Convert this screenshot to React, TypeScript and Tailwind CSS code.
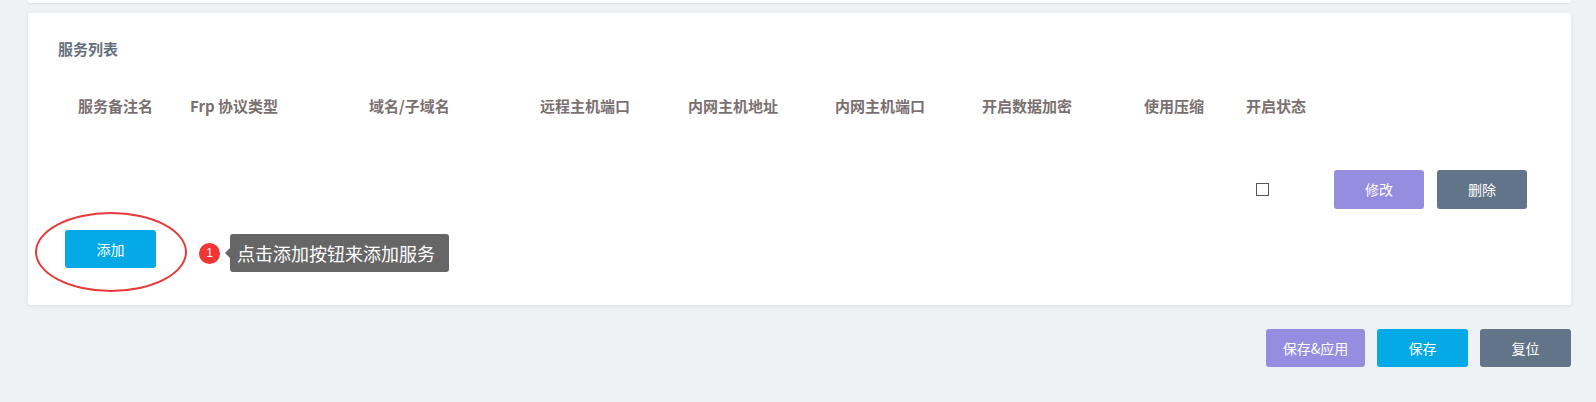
import React from 'react'

const cjk = { fontFamily: '"Noto Sans CJK SC", "Noto Sans", sans-serif' }

// header columns: label + cell width (px), text left-aligned
const columns: [string, number][] = [
  ['服务备注名', 112],
  ['Frp 协议类型', 179],
  ['域名/子域名', 171],
  ['远程主机端口', 148],
  ['内网主机地址', 147],
  ['内网主机端口', 147],
  ['开启数据加密', 162],
  ['使用压缩', 102],
  ['开启状态', 88],
]

export default function App() {
  return (
    <div className="w-full h-[402px] overflow-hidden bg-[#eff2f4] pl-[28px] pr-[25px]" style={cjk}>
      {/* tail of the card above */}
      <div className="h-[3px] bg-white rounded-b shadow-[0_1px_3px_rgba(0,0,0,0.08)]" />

      {/* service list card */}
      <div className="mt-[10px] h-[292px] bg-white rounded-[3px] shadow-[0_1px_4px_rgba(0,0,0,0.08)] pt-[26px] pl-[30px]">
        <h3 className="text-[15px] leading-[20px] font-semibold text-[#66717d]">服务列表</h3>

        {/* table header */}
        <div className="mt-[37px] flex pl-[20px] h-[20px] items-center">
          {columns.map(([label, w]) => (
            <div key={label} className="shrink-0 text-[15px] leading-[20px] font-bold text-[#7a7070] whitespace-nowrap" style={{ width: w }}>
              {label}
            </div>
          ))}
        </div>

        {/* single row */}
        <div className="mt-[54px] flex items-center h-[39px]">
          <div className="w-[1198px] shrink-0" />
          <div className="w-[78px] shrink-0 flex">
            <span className="w-[13px] h-[13px] border border-[#555] bg-white" />
          </div>
          <div className="flex gap-[13px]">
            <button className="w-[90px] h-[39px] rounded-[3px] bg-[#958ee0] text-white text-[14px]">修改</button>
            <button className="w-[90px] h-[39px] rounded-[3px] bg-[#627487] text-white text-[14px]">删除</button>
          </div>
        </div>

        {/* add button with annotation */}
        <div className="mt-[21px] flex items-start">
          <div className="relative ml-[7px]">
            <button className="relative z-10 w-[91px] h-[38px] rounded-[3px] bg-[#04a9e6] text-white text-[14px]">添加</button>
            <div className="absolute left-[-30px] top-[-18px] w-[152px] h-[80px] rounded-[50%] border-2 border-[#e53b3b]" />
          </div>
          <div className="ml-[43px] mt-[4px] flex items-center">
            <span className="w-[21px] h-[21px] rounded-full bg-[#ef3535] text-white text-[12px] leading-[21px] text-center" style={{ fontFamily: 'Arial, "Liberation Sans", sans-serif' }}>1</span>
            <span className="ml-[5px] w-0 h-0 border-y-[5px] border-y-transparent border-r-[5px] border-r-[#666]" />
            <span className="h-[38px] pl-[7px] pr-[14px] rounded-[3px] bg-[#666] text-white text-[18px] leading-[38px] whitespace-nowrap">点击添加按钮来添加服务</span>
          </div>
        </div>
      </div>

      {/* bottom actions */}
      <div className="mt-[24px] flex justify-end gap-[12px]">
        <button className="w-[99px] h-[38px] rounded-[3px] bg-[#958ee0] text-white text-[14px]">保存&amp;应用</button>
        <button className="w-[91px] h-[38px] rounded-[3px] bg-[#04a9e6] text-white text-[14px]">保存</button>
        <button className="w-[91px] h-[38px] rounded-[3px] bg-[#627487] text-white text-[14px]">复位</button>
      </div>
    </div>
  )
}
